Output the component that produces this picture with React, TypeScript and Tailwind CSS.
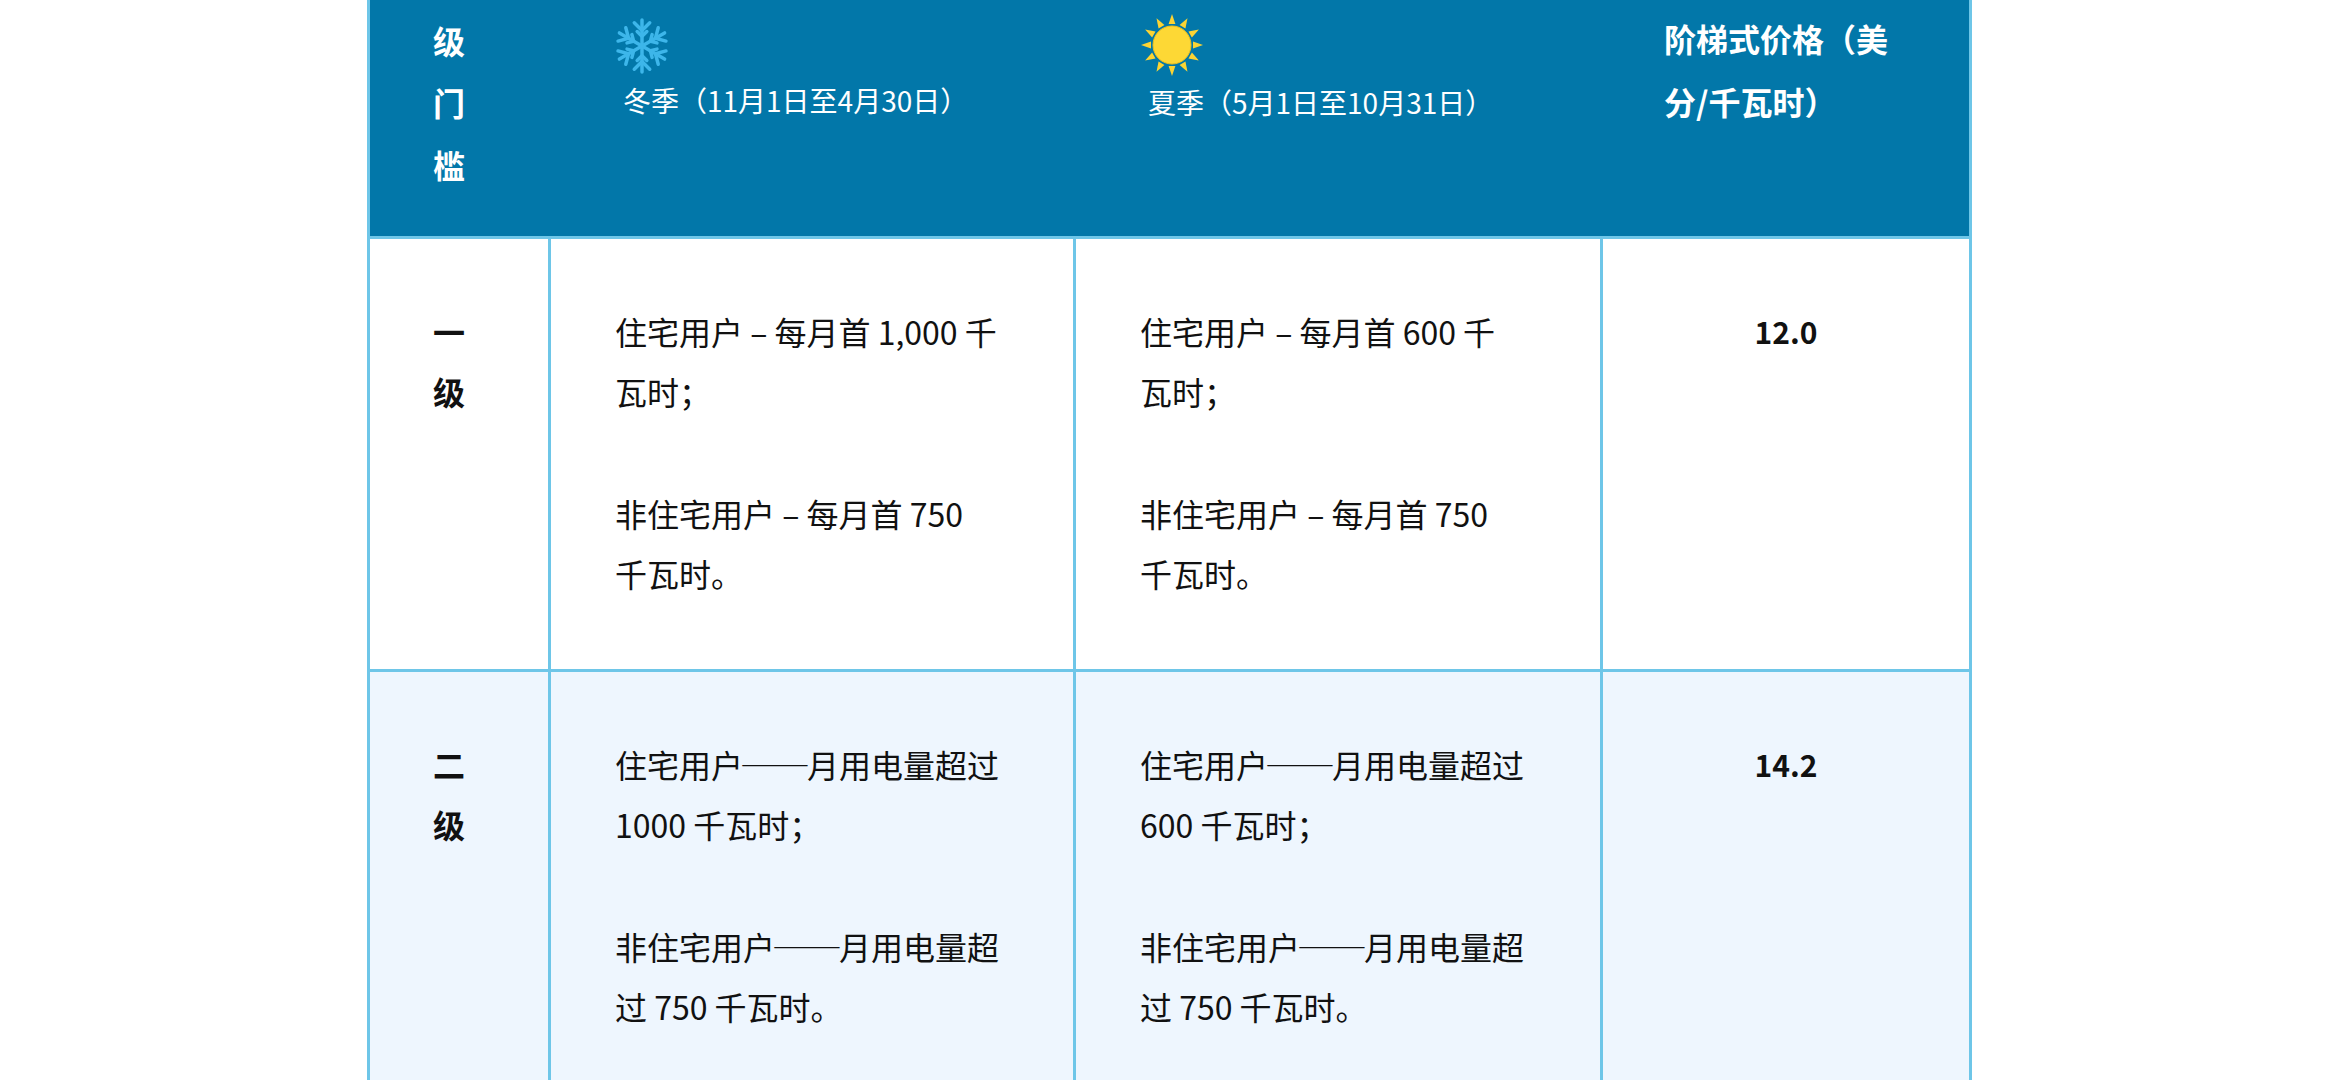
import React from "react";

const rowBorder = "border-[#6ec6e8]";

const Snowflake = () => (
  <svg width="58" height="58" viewBox="0 0 60 60" className="block">
    {[0, 60, 120, 180, 240, 300].map((a) => (
      <g key={a} transform={`rotate(${a} 30 30)`} stroke="#3db6ea" strokeWidth="3.6" strokeLinecap="round" fill="none">
        <line x1="30" y1="30" x2="30" y2="3" />
        <polyline points="22,6 30,14 38,6" />
        <polyline points="25,15 30,20 35,15" />
      </g>
    ))}
  </svg>
);

const Sun = () => (
  <svg width="64" height="64" viewBox="0 0 64 64" className="block">
    {Array.from({ length: 12 }).map((_, i) => (
      <polygon
        key={i}
        points="32,1 28.6,11 35.4,11"
        fill="#fcd433"
        transform={`rotate(${i * 30} 32 32)`}
      />
    ))}
    <circle cx="32" cy="32" r="19" fill="#fdd835" stroke="#f2c21b" strokeWidth="1" />
  </svg>
);

type Row = {
  level: string[];
  winter: string[][];
  summer: string[][];
  price: string;
  bg: string;
};

const rows: Row[] = [
  {
    level: ["一", "级"],
    winter: [
      ["住宅用户 – 每月首 1,000 千", "瓦时；"],
      ["非住宅用户 – 每月首 750", "千瓦时。"],
    ],
    summer: [
      ["住宅用户 – 每月首 600 千", "瓦时；"],
      ["非住宅用户 – 每月首 750", "千瓦时。"],
    ],
    price: "12.0",
    bg: "bg-white",
  },
  {
    level: ["二", "级"],
    winter: [
      ["住宅用户——月用电量超过", "1000 千瓦时；"],
      ["非住宅用户——月用电量超", "过 750 千瓦时。"],
    ],
    summer: [
      ["住宅用户——月用电量超过", "600 千瓦时；"],
      ["非住宅用户——月用电量超", "过 750 千瓦时。"],
    ],
    price: "14.2",
    bg: "bg-[#eef6fe]",
  },
];

// em dashes should fill two full CJK cells, like the reference
const withDashes = (text: string) =>
  text.split(/(——)/).map((part, i) =>
    part === "——" ? (
      <span key={i} className="inline-block scale-x-[1.1] [font-feature-settings:'fwid']">
        ——
      </span>
    ) : (
      <React.Fragment key={i}>{part}</React.Fragment>
    )
  );

const Lines = ({ lines }: { lines: string[] }) => (
  <>
    {lines.map((l, i) => (
      <React.Fragment key={i}>
        {i > 0 && <br />}
        {withDashes(l)}
      </React.Fragment>
    ))}
  </>
);

const Paragraphs = ({ paras }: { paras: string[][] }) => (
  <div>
    {paras.map((p, i) => (
      <p key={i} className={`whitespace-nowrap ${i > 0 ? "mt-[62px]" : ""}`}>
        <Lines lines={p} />
      </p>
    ))}
  </div>
);

export default function App() {
  return (
    <div className="min-h-screen bg-white font-['Noto_Sans_CJK_SC','Noto_Sans',sans-serif]">
      <div className={`mx-auto w-[1605px] border-x-[3px] ${rowBorder}`}>
        {/* header */}
        <div className={`grid grid-cols-[181px_525px_527px_366px] bg-[#0277a9] text-white border-b-[3px] ${rowBorder}`}>
          <div className="pl-[63px] pt-[9px] pb-[41px] text-[32px] font-bold leading-[62px]">
            级<br />门<br />槛
          </div>
          <div className="pl-[62px] pt-[17px]">
            <Snowflake />
            <div className="ml-[10px] text-[28px] leading-[50px]">冬季（11月1日至4月30日）</div>
          </div>
          <div className="pl-[64px] pt-[13px]">
            <Sun />
            <div className="ml-[8px] text-[28px] leading-[50px]">夏季（5月1日至10月31日）</div>
          </div>
          <div className="pl-[61px] pt-[7px] text-[32px] font-bold leading-[63px]">
            阶梯式价格（美<br />分/千瓦时）
          </div>
        </div>

        {rows.map((r, idx) => (
          <div
            key={idx}
            className={`grid grid-cols-[181px_525px_527px_366px] border-b-[3px] ${rowBorder} ${r.bg} text-[32px] leading-[60px] text-[#111]`}
          >
            <div className={`border-r-[3px] ${rowBorder} pl-[63px] pt-[62px] font-bold`}>
              <Lines lines={r.level} />
            </div>
            <div className={`border-r-[3px] ${rowBorder} pl-[64px] pt-[62px] pb-[66px]`}>
              <Paragraphs paras={r.winter} />
            </div>
            <div className={`border-r-[3px] ${rowBorder} pl-[64px] pt-[62px] pb-[66px]`}>
              <Paragraphs paras={r.summer} />
            </div>
            <div className="pt-[62px] text-center text-[30px] font-bold">{r.price}</div>
          </div>
        ))}
      </div>
    </div>
  );
}
